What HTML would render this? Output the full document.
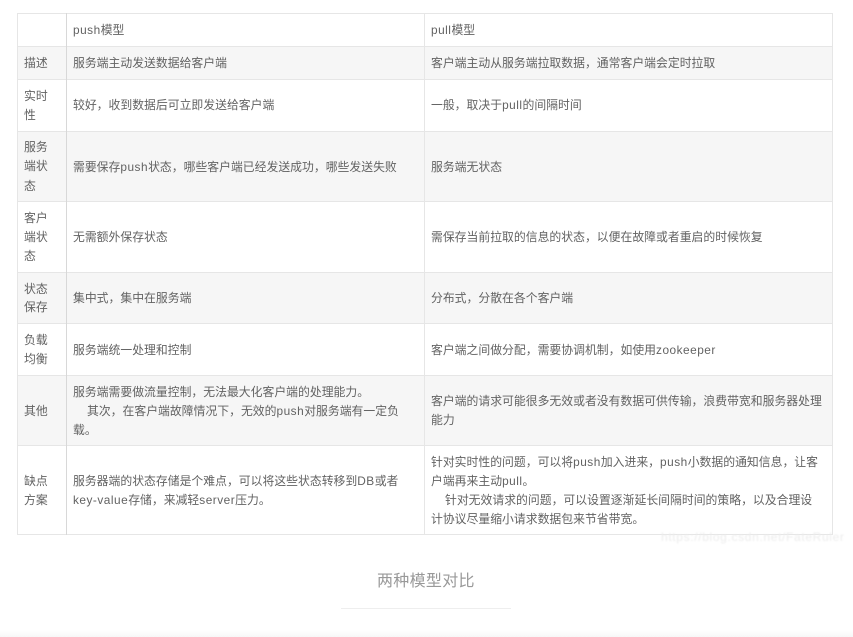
<!DOCTYPE html>
<html lang="zh">
<head>
<meta charset="utf-8">
<style>
html,body{margin:0;padding:0;background:#fff}
body{position:relative;width:853px;height:637px;overflow:hidden;font-family:"Liberation Sans","Noto Sans CJK SC",sans-serif;font-size:11.85px;line-height:19px;color:#626262}
div{position:absolute}
.t{white-space:nowrap;height:19px;filter:blur(.25px)}
.l{background:#e6e6e6}
.g{background:#f6f6f6;left:18px;width:814px}
.lat{letter-spacing:.5px}
</style>
</head>
<body>
<div class="g" style="top:47px;height:32px"></div>
<div class="g" style="top:132px;height:69px"></div>
<div class="g" style="top:273px;height:50px"></div>
<div class="g" style="top:376px;height:69px"></div>

<div class="l" style="left:17px;top:13px;width:816px;height:1px"></div>
<div class="l" style="left:17px;top:46px;width:816px;height:1px"></div>
<div class="l" style="left:17px;top:79px;width:816px;height:1px"></div>
<div class="l" style="left:17px;top:131px;width:816px;height:1px"></div>
<div class="l" style="left:17px;top:201px;width:816px;height:1px"></div>
<div class="l" style="left:17px;top:272px;width:816px;height:1px"></div>
<div class="l" style="left:17px;top:323px;width:816px;height:1px"></div>
<div class="l" style="left:17px;top:375px;width:816px;height:1px"></div>
<div class="l" style="left:17px;top:445px;width:816px;height:1px"></div>
<div class="l" style="left:17px;top:534px;width:816px;height:1px"></div>
<div class="l" style="left:17px;top:13px;width:1px;height:522px"></div>
<div class="l" style="left:66px;top:13px;width:1px;height:522px;background:#d8d8d8"></div>
<div class="l" style="left:424px;top:13px;width:1px;height:522px"></div>
<div class="l" style="left:832px;top:13px;width:1px;height:522px"></div>

<div class="t" style="left:73px;top:21px"><span class="lat">push</span>模型</div>
<div class="t" style="left:431px;top:21px"><span class="lat">pull</span>模型</div>

<div class="t" style="left:24px;top:54px">描述</div>
<div class="t" style="left:73px;top:54px">服务端主动发送数据给客户端</div>
<div class="t" style="left:431px;top:54px">客户端主动从服务端拉取数据，通常客户端会定时拉取</div>

<div class="t" style="left:24px;top:87px">实时</div>
<div class="t" style="left:24px;top:106px">性</div>
<div class="t" style="left:73px;top:96px">较好，收到数据后可立即发送给客户端</div>
<div class="t" style="left:431px;top:96px">一般，取决于<span class="lat">pull</span>的间隔时间</div>

<div class="t" style="left:24px;top:138px">服务</div>
<div class="t" style="left:24px;top:157px">端状</div>
<div class="t" style="left:24px;top:177px">态</div>
<div class="t" style="left:73px;top:158px">需要保存<span class="lat">push</span>状态，哪些客户端已经发送成功，哪些发送失败</div>
<div class="t" style="left:431px;top:158px">服务端无状态</div>

<div class="t" style="left:24px;top:209px">客户</div>
<div class="t" style="left:24px;top:228px">端状</div>
<div class="t" style="left:24px;top:247px">态</div>
<div class="t" style="left:73px;top:228px">无需额外保存状态</div>
<div class="t" style="left:431px;top:228px">需保存当前拉取的信息的状态，以便在故障或者重启的时候恢复</div>

<div class="t" style="left:24px;top:280px">状态</div>
<div class="t" style="left:24px;top:298px">保存</div>
<div class="t" style="left:73px;top:289px">集中式，集中在服务端</div>
<div class="t" style="left:431px;top:289px">分布式，分散在各个客户端</div>

<div class="t" style="left:24px;top:331px">负载</div>
<div class="t" style="left:24px;top:350px">均衡</div>
<div class="t" style="left:73px;top:341px">服务端统一处理和控制</div>
<div class="t" style="left:431px;top:341px">客户端之间做分配，需要协调机制，如使用<span class="lat">zookeeper</span></div>

<div class="t" style="left:24px;top:402px">其他</div>
<div class="t" style="left:73px;top:383px">服务端需要做流量控制，无法最大化客户端的处理能力。</div>
<div class="t" style="left:87px;top:402px">其次，在客户端故障情况下，无效的<span class="lat">push</span>对服务端有一定负</div>
<div class="t" style="left:73px;top:421px">载。</div>
<div class="t" style="left:431px;top:392px">客户端的请求可能很多无效或者没有数据可供传输，浪费带宽和服务器处理</div>
<div class="t" style="left:431px;top:411px">能力</div>

<div class="t" style="left:24px;top:472px">缺点</div>
<div class="t" style="left:24px;top:491px">方案</div>
<div class="t" style="left:73px;top:472px">服务器端的状态存储是个难点，可以将这些状态转移到<span class="lat">DB</span>或者</div>
<div class="t" style="left:73px;top:491px"><span class="lat">key-value</span>存储，来减轻<span class="lat">server</span>压力。</div>
<div class="t" style="left:431px;top:453px">针对实时性的问题，可以将<span class="lat">push</span>加入进来，<span class="lat">push</span>小数据的通知信息，让客</div>
<div class="t" style="left:431px;top:472px">户端再来主动<span class="lat">pull</span>。</div>
<div class="t" style="left:445px;top:491px">针对无效请求的问题，可以设置逐渐延长间隔时间的策略，以及合理设</div>
<div class="t" style="left:431px;top:510px">计协议尽量缩小请求数据包来节省带宽。</div>

<div class="t" style="left:661px;top:528px;font-size:12px;color:#ececec;letter-spacing:.65px;filter:blur(.7px)">https://blog.csdn.net/FateRuler</div>

<div class="t" style="left:377px;top:572px;font-size:16px;color:#999;letter-spacing:.3px">两种模型对比</div>
<div class="l" style="left:341px;top:608px;width:170px;height:1px;background:#eeeeee"></div>
<div style="left:0;top:630px;width:853px;height:7px;background:linear-gradient(#fff,#f7f7f7)"></div>
</body>
</html>
